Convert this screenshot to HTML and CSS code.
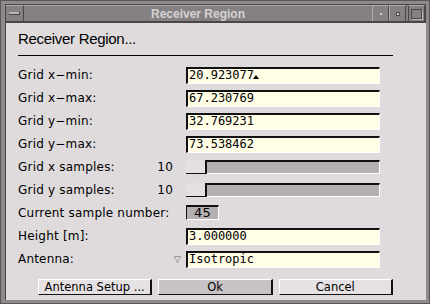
FILE: index.html
```html
<!DOCTYPE html>
<html lang="en">
<head>
  <meta charset="UTF-8" />
  <title>Receiver Region</title>
  <link rel="stylesheet" href="styles.css">
</head>
<body>

  <div class="window">
    <div class="titlebar">
      <div class="tbtn menu"><span class="bar"></span></div>
      <div class="title">Receiver Region</div>
      <div class="tbtn"><span class="dot"></span></div>
      <div class="tbtn"><span class="sq"></span></div>
      <div class="tbtn big"><span class="bigsq"></span></div>
    </div>

    <div class="content">
      <h1 class="heading">Receiver Region...</h1>
      <div class="rule"></div>

      <div class="form">
        <div class="label">Grid x&minus;min:</div>
        <div class="field">20.923077<span class="caret"></span></div>

        <div class="label">Grid x&minus;max:</div>
        <div class="field">67.230769</div>

        <div class="label">Grid y&minus;min:</div>
        <div class="field">32.769231</div>

        <div class="label">Grid y&minus;max:</div>
        <div class="field">73.538462</div>

        <div class="label"><span>Grid x samples:</span><span class="num">10</span></div>
        <div class="slider"><span class="thumb"></span><span class="track"></span></div>

        <div class="label"><span>Grid y samples:</span><span class="num">10</span></div>
        <div class="slider"><span class="thumb"></span><span class="track"></span></div>

        <div class="label">Current sample number:</div>
        <div><div class="count">45</div></div>

        <div class="label">Height [m]:</div>
        <div class="field">3.000000</div>

        <div class="label"><span>Antenna:</span><span class="tri">&#9661;</span></div>
        <div class="field">Isotropic</div>
      </div>

      <div class="buttons">
        <button class="btn">Antenna Setup ...</button>
        <button class="btn ok">Ok</button>
        <button class="btn">Cancel</button>
      </div>
    </div>
  </div>

</body>
</html>
```

FILE: styles.css
```css
* {
  margin: 0;
  padding: 0;
  box-sizing: border-box;
}

body {
  background: #8a8688;
  font-family: 'DejaVu Sans', sans-serif;
}

.window {
  width: 430px;
  height: 304px;
  background: #8e8a8c;
  border: 1px solid #5a5658;
  padding: 3px 3px 3px 4px;
  display: flex;
  flex-direction: column;
}

/* title bar */
.titlebar {
  height: 18px;
  display: flex;
  border: 1px solid #4a4648;
  background: #858183;
}

.tbtn {
  width: 17px;
  border-left: 1px solid #b0acae;
  border-top: 1px solid #b0acae;
  border-right: 1px solid #4a4648;
  display: flex;
  align-items: center;
  justify-content: center;
}

.tbtn.menu {
  width: 18px;
  border-left: none;
}

.tbtn.big {
  width: 17px;
  margin-left: 2px;
  border-left: 1px solid #4a4648;
}

.bar {
  width: 11px;
  height: 3px;
  background: #b8b4b6;
  border-bottom: 1px solid #4a4648;
  border-right: 1px solid #4a4648;
}

.dot {
  width: 2px;
  height: 2px;
  background: #d0ccce;
}

.sq {
  width: 4px;
  height: 4px;
  background: #d0ccce;
  border: 1px solid #4a4648;
}

.bigsq {
  width: 11px;
  height: 10px;
  border: 1px solid #4a4648;
  box-shadow: 1px 1px 0 #b8b4b6;
}

.title {
  flex: 1;
  text-align: center;
  color: #d6d2d4;
  font-weight: bold;
  font-size: 12px;
  line-height: 16px;
  font-family: 'Liberation Sans', sans-serif;
  border-top: 1px solid #a8a4a6;
}

/* dialog body */
.content {
  flex: 1;
  background: #dfdbdd;
  border-top: 1px solid #4a4648;
  border-left: 1px solid #4a4648;
  padding: 7px 33px 0 12px;
}

.heading {
  font-family: 'Liberation Sans', sans-serif;
  font-weight: normal;
  font-size: 15px;
  letter-spacing: -0.3px;
  line-height: 18px;
  color: #000;
}

.rule {
  height: 1px;
  background: #000;
  margin: 7px 0 11px;
}

.form {
  display: grid;
  grid-template-columns: 168px 194px;
  grid-auto-rows: 17px;
  row-gap: 6px;
  font-size: 12px;
  letter-spacing: 0.2px;
  color: #000;
}

.label {
  display: flex;
  justify-content: space-between;
  align-items: center;
  padding-right: 13px;
  line-height: 17px;
}

.label .tri {
  font-size: 9px;
  color: #6a6668;
  margin-right: -8px;
}

.field {
  background: #fffde6;
  border-top: 2px solid #111;
  border-left: 2px solid #111;
  border-bottom: 1px solid #fff;
  border-right: 1px solid #fff;
  font-family: 'DejaVu Sans Mono', monospace;
  font-size: 12px;
  letter-spacing: 0;
  line-height: 13px;
  padding-left: 1px;
}

.caret {
  display: inline-block;
  width: 0;
  height: 0;
  border-left: 3px solid transparent;
  border-right: 3px solid transparent;
  border-bottom: 4px solid #000;
  margin-left: -1px;
}

.slider {
  display: flex;
  height: 14px;
  margin-top: 1px;
}

.thumb {
  width: 21px;
  background: #e4e0e2;
  border-right: 2px solid #111;
  border-bottom: 1px solid #111;
}

.track {
  flex: 1;
  background: #b4b0b2;
  border-top: 2px solid #111;
  border-bottom: 1px solid #fff;
  border-right: 1px solid #fff;
}

.count {
  width: 33px;
  height: 15px;
  background: #b4b0b2;
  border-top: 2px solid #111;
  border-left: 1px solid #111;
  border-bottom: 1px solid #fff;
  border-right: 1px solid #fff;
  font-size: 13px;
  line-height: 12px;
  text-align: center;
}

.buttons {
  display: flex;
  gap: 6px;
  margin: 11px 0 0 20px;
}

.btn {
  width: 116px;
  height: 16px;
  padding: 0;
  white-space: nowrap;
  background: #e6e2e4;
  border-top: 1px solid #fff;
  border-left: 1px solid #fff;
  border-right: 2px solid #111;
  border-bottom: 1px solid #111;
  font-family: 'DejaVu Sans', sans-serif;
  font-size: 11.5px;
  line-height: 13px;
  letter-spacing: 0;
  color: #000;
}

.btn.ok {
  background: #c6c2c6;
}
```
